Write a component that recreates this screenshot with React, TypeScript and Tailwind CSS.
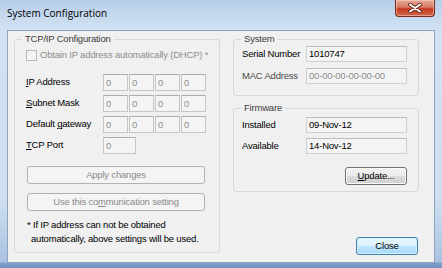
import clsx from 'clsx'
import type { ReactNode } from 'react'

interface GroupBoxProps {
  title: string
  className?: string
  children: ReactNode
}

const GroupBox = ({ title, className, children }: GroupBoxProps) => (
  <fieldset
    className={clsx('rounded-[3px] border border-[#d0dae1]', className)}
  >
    <legend className="ml-[7px] px-[3px] leading-[12px] text-[#3c3c3c]">
      {title}
    </legend>
    {children}
  </fieldset>
)

const Field = ({
  value,
  className,
  muted,
}: {
  value: string
  className?: string
  muted?: boolean
}) => (
  <div
    className={clsx(
      'flex items-center border border-[#c6c6c6] border-t-[#adadad] bg-[#f4f4f4] pl-[2px] leading-none',
      muted ? 'text-[#8e8e8e]' : 'text-black',
      className
    )}
  >
    {value}
  </div>
)

const Key = ({ children }: { children: string }) => (
  <span className="underline underline-offset-[1px]">{children}</span>
)

const IpRow = ({ label, className }: { label: ReactNode; className?: string }) => (
  <div className={clsx('flex h-[17px] items-center', className)}>
    <span className="w-[77px]">{label}</span>
    <div className="flex gap-[1px]">
      {[0, 1, 2, 3].map((i) => (
        <Field key={i} value="0" muted className="h-[17px] w-[25px]" />
      ))}
    </div>
  </div>
)

const InfoRow = ({
  label,
  value,
  muted,
  className,
}: {
  label: string
  value: string
  muted?: boolean
  className?: string
}) => (
  <div className={clsx('flex h-[16px] items-center', className)}>
    <span className={clsx('w-[64px]', muted && 'text-[#4a4a4a]')}>{label}</span>
    <Field
      value={value}
      muted={muted}
      className="h-[16px] w-[101px] border-[#cfcfcf] border-t-[#bdbdbd] bg-[#f0f0f0]"
    />
  </div>
)

export default function App() {
  return (
    <div className="h-[268px] w-[442px] overflow-hidden bg-[linear-gradient(#b7cee8,#d2e2f3_30px,#cfdff1_200px,#a9c2e0_262px,#7e9fc9_263px,#6f93c2)] px-[7px] pb-[5px] font-['Liberation_Sans',Arial,sans-serif] text-[9.5px] tracking-[-0.2px] text-black">
      {/* title bar */}
      <div className="flex h-[30px] items-start justify-between">
        <span className="pt-[6px] font-['Open_Sans',sans-serif] text-[10px] leading-[14px] tracking-normal text-black">
          System Configuration
        </span>
        <div className="flex h-[17px] w-[40px] items-center justify-center rounded-b-[4px] border border-t-0 border-[#7a2a1c] bg-[linear-gradient(#e9a898,#d77a64_45%,#c23a20_55%,#d2674e)] shadow-[inset_0_0_0_1px_rgba(255,220,210,0.5)]">
          <svg width="14" height="10" viewBox="0 0 14 10">
            <path d="M2 1.5 L12 8.5 M12 1.5 L2 8.5" stroke="#5b1b10" strokeWidth="3.6" strokeLinecap="round" />
            <path d="M2 1.5 L12 8.5 M12 1.5 L2 8.5" stroke="#ffffff" strokeWidth="2" strokeLinecap="round" />
          </svg>
        </div>
      </div>

      {/* client area */}
      <div className="flex h-[233px] gap-[13px] border border-[#8ea3bd] bg-[#f0f0f0] pl-[6px] pt-[2px]">
        <GroupBox title="TCP/IP Configuration" className="h-[220px] w-[206px]">
          <div className="flex flex-col pl-[11px] pt-[4px]">
            <div className="flex h-[13px] items-center gap-[3px] text-[#8e8e8e]">
              <span className="h-[11px] w-[11px] border border-[#b9b9b9] bg-[#f4f4f4]" />
              <span>Obtain IP address automatically (DHCP) *</span>
            </div>
            <IpRow label={<><Key>I</Key>P Address</>} className="mt-[12px]" />
            <IpRow label={<><Key>S</Key>ubnet Mask</>} className="mt-[4px]" />
            <IpRow label={<>Default <Key>g</Key>ateway</>} className="mt-[4px]" />
            <div className="mt-[4px] flex h-[17px] items-center">
              <span className="w-[77px]">
                <Key>T</Key>CP Port
              </span>
              <Field value="0" muted className="h-[17px] w-[33px]" />
            </div>
            <button className="ml-[1px] mt-[12px] flex h-[18px] w-[178px] items-center justify-center rounded-[3px] border border-[#adb2b5] bg-[#f4f4f4] text-[#8a8a8a]">
              Apply changes
            </button>
            <button className="ml-[1px] mt-[9px] flex h-[18px] w-[178px] items-center justify-center rounded-[3px] border border-[#adb2b5] bg-[#f4f4f4] text-[#8a8a8a]">
              Use this co<Key>m</Key>munication setting
            </button>
            <div className="ml-[1px] mt-[7px] leading-[14px]">
              <p>* If IP address can not be obtained</p>
              <p className="pl-[4px]">automatically, above settings will be used.</p>
            </div>
          </div>
        </GroupBox>

        <div className="flex w-[186px] flex-col">
          <GroupBox title="System" className="h-[63px]">
            <div className="flex flex-col gap-[6px] pl-[8px] pt-[1px]">
              <InfoRow label="Serial Number" value="1010747" />
              <InfoRow label="MAC Address" value="00-00-00-00-00-00" muted />
            </div>
          </GroupBox>

          <GroupBox title="Firmware" className="mt-[6px] h-[90px]">
            <div className="flex flex-col pl-[8px] pt-[3px]">
              <InfoRow label="Installed" value="09-Nov-12" />
              <InfoRow label="Available" value="14-Nov-12" className="mt-[5px]" />
              <button className="mr-[11px] mt-[13px] flex h-[18px] w-[62px] items-center justify-center self-end rounded-[3px] border border-[#707070] bg-[linear-gradient(#f2f2f2,#ebebeb_50%,#dddddd_50%,#cfcfcf)] shadow-[inset_0_0_0_1px_#fcfcfc]">
                <Key>U</Key>pdate...
              </button>
            </div>
          </GroupBox>

          <button className="mr-[1px] mt-[45px] flex h-[18px] w-[62px] items-center justify-center self-end rounded-[3px] border border-[#3c7fb1] bg-[linear-gradient(#eaf6fd,#d9f0fc_50%,#bee6fd_50%,#a7d9f5)] shadow-[inset_0_0_0_1px_#d6f0fd]">
            Close
          </button>
        </div>
      </div>
    </div>
  )
}
